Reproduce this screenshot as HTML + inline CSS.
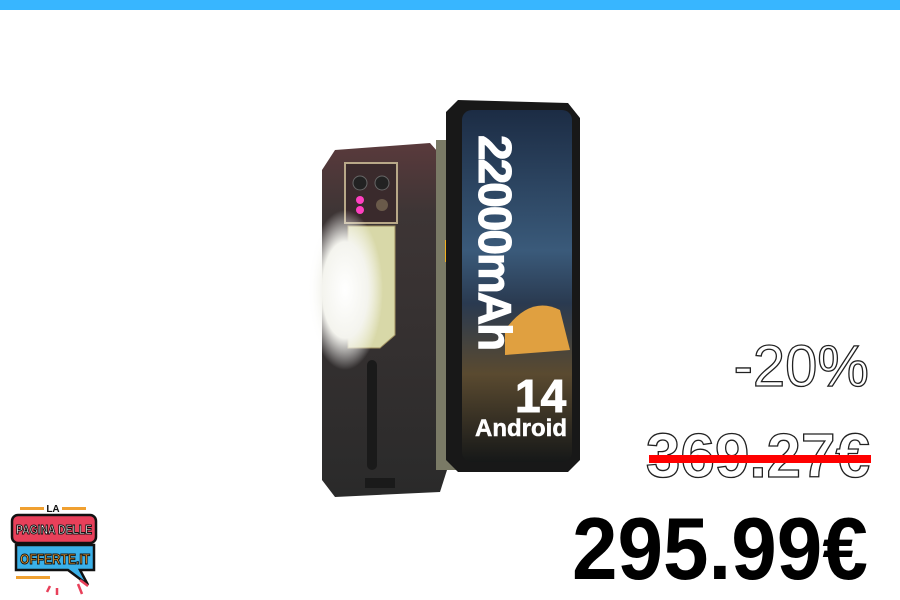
<!DOCTYPE html>
<html><head><meta charset="utf-8"><style>
*{margin:0;padding:0;box-sizing:border-box}
body{width:900px;height:600px;background:#fff;position:relative;overflow:hidden;font-family:"Liberation Sans",sans-serif}
.bar{position:absolute;left:0;top:0;width:900px;height:10px;background:#38b6ff}
.t{position:absolute;font-weight:700;white-space:nowrap}
.ol{color:#fff;-webkit-text-stroke:1.3px #222}
</style></head><body>
<div class="bar"></div>

<svg style="position:absolute;left:0;top:0" width="900" height="600">
  <defs>
    <linearGradient id="bk" x1="0" y1="0" x2="0" y2="1">
      <stop offset="0" stop-color="#5a3a3c"/><stop offset="0.2" stop-color="#3d3535"/><stop offset="1" stop-color="#2a2a2a"/>
    </linearGradient>
    <radialGradient id="glow" cx="0.5" cy="0.5" r="0.5">
      <stop offset="0" stop-color="#fff"/><stop offset="0.6" stop-color="#f4f4ee"/><stop offset="1" stop-color="#fff" stop-opacity="0"/>
    </radialGradient>
    <linearGradient id="scr" x1="0" y1="0" x2="0" y2="1">
      <stop offset="0" stop-color="#1c2c44"/><stop offset="0.4" stop-color="#3a5a7a"/><stop offset="0.55" stop-color="#2a3a50"/><stop offset="0.75" stop-color="#5a4a30"/><stop offset="1" stop-color="#161818"/>
    </linearGradient>
  </defs>
  <path d="M335 150 L430 143 L445 160 L447 470 L440 492 L335 497 L322 480 L322 170 Z" fill="url(#bk)"/>
  <rect x="345" y="163" width="52" height="60" fill="#3a2a2c" stroke="#b8a888" stroke-width="2"/>
  <circle cx="360" cy="183" r="7" fill="#222" stroke="#666"/>
  <circle cx="382" cy="183" r="7" fill="#222" stroke="#666"/>
  <circle cx="382" cy="205" r="6" fill="#6a5a4a"/>
  <circle cx="360" cy="200" r="4" fill="#ff40c0"/><circle cx="360" cy="210" r="4" fill="#ff40c0"/>
  <path d="M348 226 L395 226 L395 335 L380 348 L348 348 Z" fill="#d8d8a8" stroke="#a09060"/>
  <ellipse cx="345" cy="290" rx="38" ry="80" fill="url(#glow)"/>
  <rect x="367" y="360" width="10" height="110" rx="5" fill="#1a1a1a"/>
  <rect x="365" y="478" width="30" height="10" fill="#1a1a1a"/>
  <rect x="436" y="140" width="20" height="330" fill="#7a7a66"/>
  <rect x="445" y="240" width="6" height="22" fill="#f0b020"/>
  <path d="M458 100 L568 103 L580 118 L580 460 L568 472 L458 472 L446 460 L446 112 Z" fill="#181818"/>
  <rect x="462" y="110" width="110" height="352" rx="10" fill="url(#scr)"/>
  <path d="M505 330 Q530 295 560 310 L570 350 L505 355 Z" fill="#e0a040"/>
</svg>

<div class="t" style="left:518px;top:135px;transform-origin:0 0;transform:rotate(90deg);font-size:46px;line-height:1;color:#fff;letter-spacing:-2px;-webkit-text-stroke:1px #fff">22000mAh</div>
<div class="t" style="left:515px;top:373px;font-size:46px;color:#fff;line-height:1;-webkit-text-stroke:1px #fff">14</div>
<div class="t" style="left:475px;top:417px;font-size:24px;color:#fff;line-height:1;-webkit-text-stroke:0.5px #fff">Android</div>

<div class="t ol" style="right:31px;top:338px;font-size:58px;line-height:1;font-weight:400">-20%</div>
<div class="t ol" style="right:30px;top:426px;font-size:62px;line-height:1">369.27€</div>
<div style="position:absolute;left:649px;top:455px;width:222px;height:8px;background:#f00"></div>
<div class="t" style="left:572px;top:505px;font-size:88px;line-height:1;color:#000;transform-origin:0 0;transform:scaleX(0.93)">295.99€</div>

<svg style="position:absolute;left:0;top:490px" width="120" height="110">
  <rect x="20" y="17" width="24" height="3" fill="#f0a030"/><rect x="62" y="17" width="24" height="3" fill="#f0a030"/>
  <text x="53" y="22" font-family="Liberation Sans" font-weight="700" font-size="10" text-anchor="middle" fill="#111">LA</text>
  <rect x="12" y="25" width="84" height="28" rx="6" fill="#e8405a" stroke="#111" stroke-width="2.5"/>
  <text x="54" y="44" font-family="Liberation Sans" font-weight="700" font-size="13" text-anchor="middle" fill="#fff" stroke="#111" stroke-width="1" textLength="76" lengthAdjust="spacingAndGlyphs">PAGINA DELLE</text>
  <path d="M16 55 L94 55 L94 80 L80 80 L88 95 L68 80 L16 80 Z" fill="#3ab0e8" stroke="#111" stroke-width="2.5"/>
  <text x="55" y="74" font-family="Liberation Sans" font-weight="700" font-size="15" text-anchor="middle" fill="#f0a030" stroke="#111" stroke-width="1" textLength="70" lengthAdjust="spacingAndGlyphs">OFFERTE.IT</text>
  <rect x="16" y="86" width="34" height="3" fill="#f0a030"/>
  <path d="M50 96 l-3 6 M57 98 l0 7 M80 90 l8 6 M78 94 l4 10" stroke="#e8405a" stroke-width="2.5"/>
</svg>
</body></html>
